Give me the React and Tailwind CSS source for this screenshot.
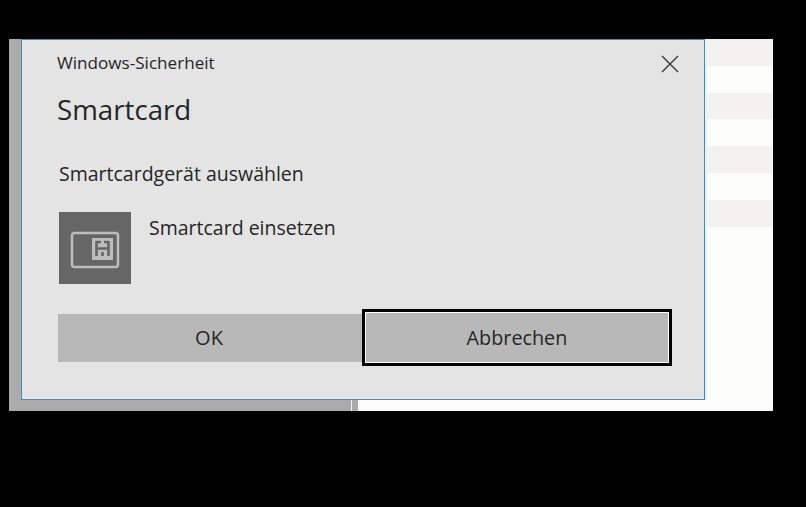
const stripes = [0, 1, 2, 3, 4, 5, 6]

function CardIcon() {
  return (
    <div className="w-[72px] h-[72px] bg-[#666666] shrink-0">
      <svg width="72" height="72" viewBox="0 0 72 72" fill="none">
        <rect x="13" y="21" width="46" height="34" rx="2.5" stroke="#bdbdbd" strokeWidth="2.5" />
        <rect x="33" y="26" width="21" height="22" fill="#bdbdbd" />
        <path d="M37.5 29v15M49.5 29v15M37.5 36.5h12M37.5 30h4.5M45 30h4.5M43.5 40v4" stroke="#666666" strokeWidth="2.6" />
      </svg>
    </div>
  )
}

export default function App() {
  return (
    <main className="w-[806px] h-[507px] bg-black pt-[39px] pl-[9px] font-['Open_Sans','Noto_Sans',sans-serif] text-[#262626] overflow-hidden">
      <div className="relative w-[764px] h-[372px] flex bg-[#fcfcfb]">
        <div className="w-[342px] bg-[#ababab]" />
        <div className="w-px bg-[#f4f4f4]" />
        <div className="w-[6px] bg-[#ababab]" />
        <div className="flex-auto flex flex-col">
          {stripes.map((row) => (
            <div
              key={row}
              className={row % 2 === 0 ? "h-[26.8px] shrink-0 bg-[#f3f2f1]" : "h-[26.8px] shrink-0 bg-[#fcfcfb]"}
            />
          ))}
        </div>

        <section className="absolute left-[12px] top-0 w-[684px] h-[361px] bg-[#e4e4e4] border border-[#4a88b5] shadow-[2px_0_0_#e6f3fb,inset_0_-2px_0_#e2e9ee] pl-[35px] pr-[32px]">
          <header className="flex justify-between items-start pt-[11px] h-[45px]">
            <span className="text-[17.1px] leading-[24px]">Windows-Sicherheit</span>
            <svg width="18" height="18" viewBox="0 0 18 18" className="mt-[4px] -mr-[7px]" stroke="#404040" strokeWidth="1.5">
              <path d="M1 1l16 16M17 1L1 17" />
            </svg>
          </header>
          <h1 className="text-[27.7px] leading-[36px] mt-[6px]">Smartcard</h1>
          <p className="text-[19.5px] leading-[26px] ml-[2px] mt-[34px]">Smartcardgerät auswählen</p>
          <div className="flex gap-[18px] ml-[2px] mt-[25px]">
            <CardIcon />
            <span className="text-[19.5px] leading-[26px] mt-[3px]">Smartcard einsetzen</span>
          </div>
          <div className="flex items-center ml-[1px] mt-[25px]">
            <button className="w-[304px] h-[48px] pr-[2px] bg-[#b8b8b8] text-[20px]">OK</button>
            <button className="w-[310px] h-[57px] bg-[#b8b8b8] text-[19.8px] border-[3px] border-black outline outline-white -outline-offset-4">
              Abbrechen
            </button>
          </div>
        </section>
      </div>
    </main>
  )
}
